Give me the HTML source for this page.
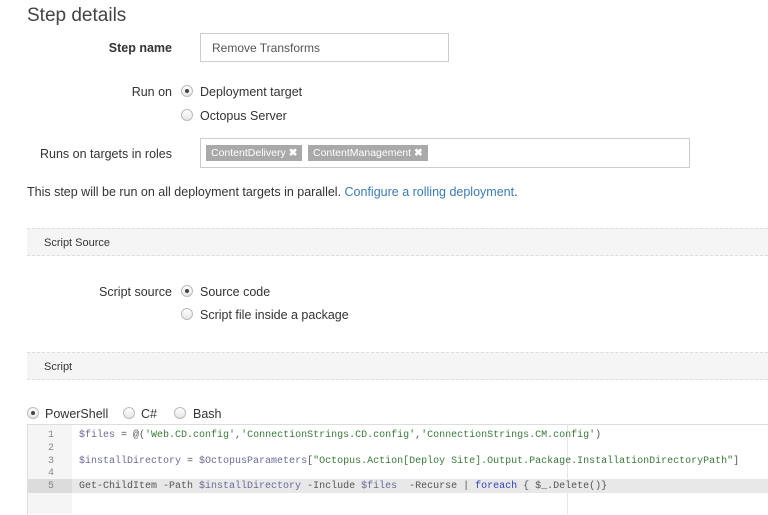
<!DOCTYPE html>
<html><head><style>
body{margin:0;width:768px;height:514px;overflow:hidden;background:#fff;font-family:"Liberation Sans",sans-serif;color:#333;font-size:12.5px;position:relative}
.a{position:absolute;white-space:nowrap}
.lbl{position:absolute;right:596px;text-align:right;white-space:nowrap}
.r{position:absolute;width:10px;height:10px;border-radius:50%;border:1px solid #bbb;background:linear-gradient(#fff,#e6e6e6)}
.r.on::after{content:"";position:absolute;left:3px;top:3px;width:4px;height:4px;border-radius:50%;background:#444}
.band{position:absolute;left:27px;right:0;height:28px;background:#f5f5f5;border-top:1px dashed #ddd;border-bottom:1px dashed #ddd;font-size:11px;line-height:28px;padding-left:17px;box-sizing:border-box}
.chip{position:absolute;top:145px;height:16px;background:#a9a9a9;color:#fff;font-size:10.5px;line-height:16px;padding:0 5px;white-space:nowrap}
.code{font-family:"Liberation Mono",monospace;font-size:10px;line-height:12.8px;position:absolute;white-space:pre}
</style></head><body>
<div class="a" style="left:27px;top:5px;font-size:19px;color:#444">Step details</div>
<div class="lbl" style="top:41px;font-weight:bold">Step name</div>
<div class="a" style="left:200px;top:33px;width:249px;height:29px;border:1px solid #ccc;box-sizing:border-box;padding-left:11px;line-height:28px;font-size:12px;color:#555">Remove Transforms</div>
<div class="lbl" style="top:85px">Run on</div>
<div class="r on" style="left:181px;top:85px"></div><div class="a" style="left:200px;top:85px">Deployment target</div>
<div class="r" style="left:181px;top:109px"></div><div class="a" style="left:200px;top:109px">Octopus Server</div>
<div class="lbl" style="top:147px">Runs on targets in roles</div>
<div class="a" style="left:200px;top:138px;width:490px;height:30px;border:1px solid #ccc;box-sizing:border-box"></div>
<div class="chip" style="left:206px">ContentDelivery <b>✖</b></div>
<div class="chip" style="left:308px">ContentManagement <b>✖</b></div>
<div class="a" style="left:27px;top:185px">This step will be run on all deployment targets in parallel. <span style="color:#3a7bb8">Configure a rolling deployment</span>.</div>
<div class="band" style="top:228px">Script Source</div>
<div class="lbl" style="top:285px">Script source</div>
<div class="r on" style="left:181px;top:285px"></div><div class="a" style="left:200px;top:285px">Source code</div>
<div class="r" style="left:181px;top:308px"></div><div class="a" style="left:200px;top:308px">Script file inside a package</div>
<div class="band" style="top:352px">Script</div>
<div class="r on" style="left:27px;top:407px"></div><div class="a" style="left:45px;top:407px">PowerShell</div>
<div class="r" style="left:123px;top:407px"></div><div class="a" style="left:141px;top:407px">C#</div>
<div class="r" style="left:174px;top:407px"></div><div class="a" style="left:193px;top:407px">Bash</div>
<div class="a" style="left:27px;top:424px;width:741px;height:90px;border-top:1px solid #ddd;border-left:1px solid #ddd"></div>
<div class="a" style="left:28px;top:425px;width:44px;height:89px;background:#f5f5f5"></div>
<div class="a" style="left:72px;top:479px;width:696px;height:14px;background:#e8e8e8"></div>
<div class="a" style="left:28px;top:479px;width:44px;height:14px;background:#dcdcdc"></div>
<div class="a" style="left:567px;top:425px;width:1px;height:89px;background:#e6e6e6"></div>
<div class="code" style="left:48px;top:430px;color:#888">1
2
3
4
5</div>
<div class="code" style="left:79px;top:430px;color:#555"><span style="color:#6a6a9a">$files</span> = @(<span style="color:#3a7a3a">'Web.CD.config'</span>,<span style="color:#3a7a3a">'ConnectionStrings.CD.config'</span>,<span style="color:#3a7a3a">'ConnectionStrings.CM.config'</span>)

<span style="color:#6a6a9a">$installDirectory</span> = <span style="color:#6a6a9a">$OctopusParameters</span>[<span style="color:#3a7a3a">"Octopus.Action[Deploy Site].Output.Package.InstallationDirectoryPath"</span>]

Get-ChildItem -Path <span style="color:#6a6a9a">$installDirectory</span> -Include <span style="color:#6a6a9a">$files</span>  -Recurse | <span style="color:#3344bb">foreach</span> { $_.Delete()}</div>
</body></html>
